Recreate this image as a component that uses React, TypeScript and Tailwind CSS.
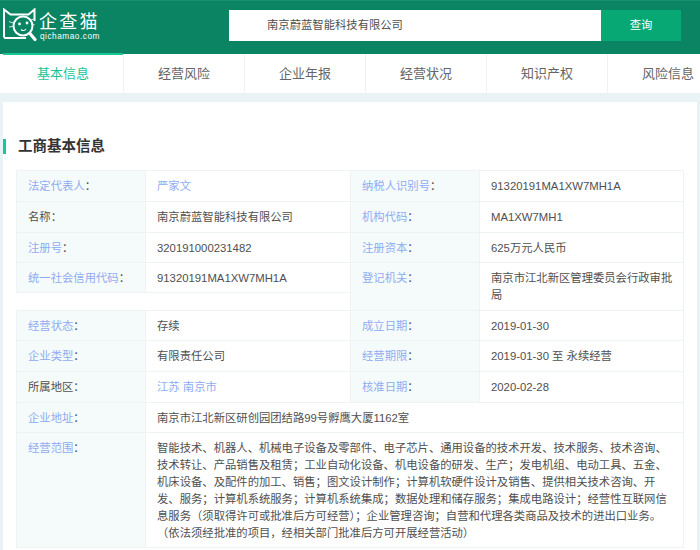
const tabs = ['基本信息', '经营风险', '企业年报', '经营状况', '知识产权', '风险信息'];

const scope = [
  '智能技术、机器人、机械电子设备及零部件、电子芯片、通用设备的技术开发、技术服务、技术咨询、',
  '技术转让、产品销售及租赁；工业自动化设备、机电设备的研发、生产；发电机组、电动工具、五金、',
  '机床设备、及配件的加工、销售；图文设计制作；计算机软硬件设计及销售、提供相关技术咨询、开',
  '发、服务；计算机系统服务；计算机系统集成；数据处理和储存服务；集成电路设计；经营性互联网信',
  '息服务（须取得许可或批准后方可经营）；企业管理咨询；自营和代理各类商品及技术的进出口业务。',
  '（依法须经批准的项目，经相关部门批准后方可开展经营活动）',
];

function Label({ text, link = true, className = '' }: { text: string; link?: boolean; className?: string }) {
  return (
    <div className={`border-t border-l border-[#eff3f3] bg-[#f5fbfa] pl-[11px] pt-[7px] leading-[17px] ${className}`}>
      <span className={link ? 'text-[#8fabf2]' : ''}>{text}</span>：
    </div>
  );
}

function Value({ children, className = '' }: { children: React.ReactNode; className?: string }) {
  return (
    <div className={`border-t border-l border-[#eff3f3] pl-[11px] pr-[6px] pt-[7px] leading-[17px] ${className}`}>
      {children}
    </div>
  );
}

function Logo() {
  return (
    <div className="flex items-start gap-[2px] self-stretch pl-[3px]">
      <svg width="34" height="34" viewBox="0 0 34 34" fill="none" stroke="white" className="mt-[7px]">
        <path d="M1 29.5V1.5L7.5 6.5H25.5L31.5 1.5V13" strokeWidth="2" />
        <path d="M1 30H23" strokeWidth="2" />
        <circle cx="20" cy="18" r="9.5" strokeWidth="2" />
        <path d="M27 25.5L32 31.5" strokeWidth="3.2" strokeLinecap="round" />
        <circle cx="16.5" cy="16" r="1.4" fill="white" stroke="none" />
        <circle cx="24" cy="15" r="1.4" fill="white" stroke="none" />
        <path d="M18 21.5C19.5 23 21.5 23 23 21" strokeWidth="1.1" />
        <path d="M6 13.5L10 15M6 19L10 18.5M27.5 12L31 11M28 16L31.5 16.5" strokeWidth="0.8" />
      </svg>
      <div className="mt-[8.5px] text-white">
        <div className="text-[18px] leading-[20px] tracking-[2.3px] font-['Noto_Sans_CJK_SC',sans-serif]">企查猫</div>
        <div className="ml-[1px] mt-[1px] text-[8.3px] leading-[10px] tracking-[0.5px]">qichamao.com</div>
      </div>
    </div>
  );
}

export default function App() {
  return (
    <div className="w-[700px] h-[550px] overflow-hidden bg-[#e9f3f5] text-[11.33px] text-[#4f4f4f] font-['Liberation_Sans','Noto_Sans_CJK_SC',sans-serif]">
      {/* header */}
      <div className="flex h-[54px] items-center justify-between bg-[#0b8463] border-t border-[#1a8f70] pr-[19px]">
        <Logo />
        <div className="flex h-[31px] w-[452px] mb-[5px]">
          <div className="flex-1 bg-white pl-[38px] leading-[31px]">南京蔚蓝智能科技有限公司</div>
          <button className="w-[80px] bg-[#07a874] text-center text-[11.33px] text-white">查询</button>
        </div>
      </div>

      {/* tabs */}
      <div className="flex h-[39px] bg-white pl-[3px] whitespace-nowrap">
        {tabs.map((tab, i) => (
          <div
            key={tab}
            className={`w-[121px] shrink-0 border-r border-[#eef2f2] text-center text-[13px] leading-[39px] ${
              i === 0 ? 'relative text-[#1cc396]' : 'text-[#666]'
            }`}
          >
            {i === 0 && <div className="absolute left-0 right-0 top-[-1.5px] h-[2px] bg-[#17c596]" />}
            {tab}
          </div>
        ))}
      </div>

      {/* card */}
      <div className="mx-[3px] mt-[9px] h-[448px] bg-white">
        <div className="flex h-[68px] items-start pt-[37px]">
          <div className="h-[15px] w-[3px] bg-[#16c79b]" />
          <h2 className="ml-[12px] text-[14.5px] font-bold leading-[15px] text-[#333]">工商基本信息</h2>
        </div>

        <div className="ml-[13px] grid w-[668px] grid-cols-[129px_205px_129px_205px] grid-rows-[31px_31px_30px_48px_30px_31px_31px_30px_115px] border-r border-b border-[#eff3f3]">
          <Label text="法定代表人" />
          <Value><span className="text-[#8fabf2]">严家文</span></Value>
          <Label text="纳税人识别号" />
          <Value>91320191MA1XW7MH1A</Value>

          <Label text="名称" link={false} />
          <Value>南京蔚蓝智能科技有限公司</Value>
          <Label text="机构代码" />
          <Value>MA1XW7MH1</Value>

          <Label text="注册号" />
          <Value>320191000231482</Value>
          <Label text="注册资本" />
          <Value>625万元人民币</Value>

          <Label text="统一社会信用代码" className="h-[31px] border-b" />
          <Value className="h-[31px] border-b">91320191MA1XW7MH1A</Value>
          <Label text="登记机关" />
          <Value>南京市江北新区管理委员会行政审批局</Value>

          <Label text="经营状态" />
          <Value>存续</Value>
          <Label text="成立日期" />
          <Value>2019-01-30</Value>

          <Label text="企业类型" />
          <Value>有限责任公司</Value>
          <Label text="经营期限" />
          <Value>2019-01-30 至 永续经营</Value>

          <Label text="所属地区" link={false} />
          <Value><span className="text-[#8fabf2]">江苏 南京市</span></Value>
          <Label text="核准日期" />
          <Value>2020-02-28</Value>

          <Label text="企业地址" />
          <Value className="col-span-3">南京市江北新区研创园团结路99号孵鹰大厦1162室</Value>

          <Label text="经营范围" />
          <Value className="col-span-3 whitespace-nowrap">
            {scope.map((line) => (
              <div key={line}>{line}</div>
            ))}
          </Value>
        </div>
      </div>
    </div>
  );
}
